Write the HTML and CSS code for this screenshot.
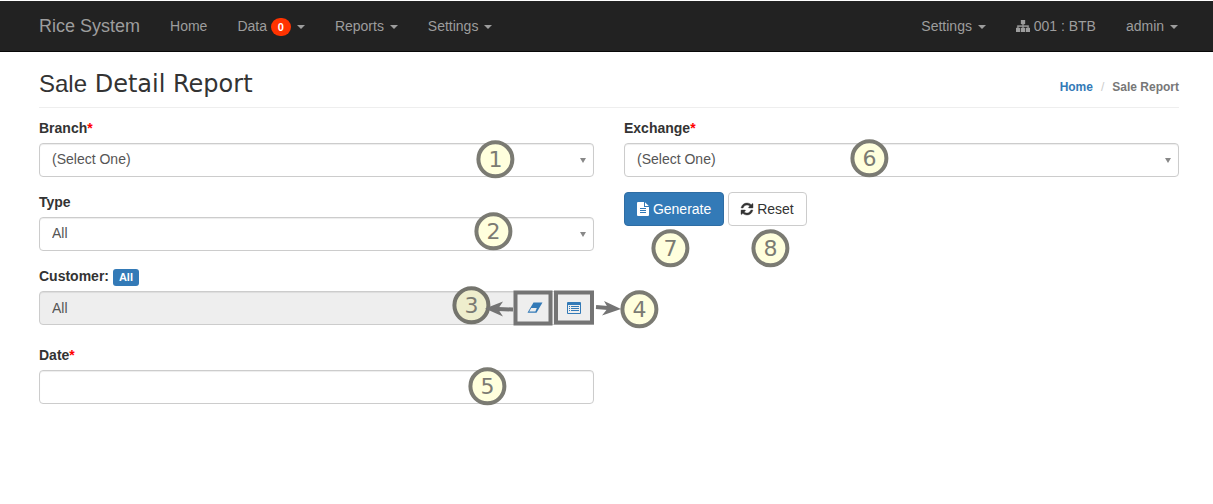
FILE: index.html
```html
<!DOCTYPE html>
<html lang="en">
<head>
<meta charset="utf-8">
<title>Sale Detail Report</title>
<link rel="stylesheet" href="styles.css">
</head>
<body>
<nav class="navbar">
  <a class="brand" href="#">Rice System</a>
  <ul class="nav">
    <li><a href="#">Home</a></li>
    <li><a href="#">Data <span class="badge">0</span> <span class="caret"></span></a></li>
    <li><a href="#">Reports <span class="caret"></span></a></li>
    <li><a href="#">Settings <span class="caret"></span></a></li>
  </ul>
  <ul class="nav nav-right">
    <li><a href="#">Settings <span class="caret"></span></a></li>
    <li><a href="#"><svg class="icon-tree" viewBox="0 0 14 12" aria-hidden="true"><path d="M5 0h4v4H7.600v1.500H12.700V8H14v4h-4V8h1.500V6.700H7.600V8H9v4H5V8h1.400V6.700H2.500V8H4v4H0V8h1.300V5.500H6.400V4H5z" fill="currentColor" stroke="currentColor" stroke-width="0.300"/></svg> 001 : BTB</a></li>
    <li><a href="#">admin <span class="caret"></span></a></li>
  </ul>
</nav>
<main class="page">
  <header class="page-header">
    <h1><span class="lead">Sale</span> Detail Report</h1>
    <ol class="breadcrumb">
      <li><a href="#">Home</a></li>
      <li class="current">Sale Report</li>
    </ol>
  </header>
  <form class="report-form">
    <div class="column">
      <div class="field">
        <label for="branch">Branch<span class="required">*</span></label>
        <div class="select-wrap"><select id="branch" class="control"><option>(Select One)</option></select></div>
      </div>
      <div class="field">
        <label for="type">Type</label>
        <div class="select-wrap"><select id="type" class="control"><option>All</option></select></div>
      </div>
      <div class="field field-customer">
        <label for="customer">Customer: <span class="tag">All</span></label>
        <div class="input-group">
          <input id="customer" class="control" type="text" value="All" readonly>
          <button type="button" class="addon" aria-label="Clear customer"><svg class="icon-addon" viewBox="0 0 16 12" aria-hidden="true"><path d="M6.500 0.500H15.500L9.500 10.800H0.500z" fill="#337ab7"/><path d="M4.200 6H9.800L8.400 9.400H2.200z" fill="#eee"/></svg></button>
          <button type="button" class="addon" aria-label="Choose customer"><svg class="icon-addon" viewBox="0 0 16 12" aria-hidden="true"><rect x="1" y="0" width="14" height="12" rx="1" fill="#337ab7"/><path d="M2 3h12v8H2z" fill="#eee"/><path d="M3 4h1v1H3zM3 6h1v1H3zM3 8h1v1H3zM5 4h8v1H5zM5 6h8v1H5zM5 8h8v1H5z" fill="#337ab7"/></svg></button>
        </div>
      </div>
      <div class="field">
        <label for="date">Date<span class="required">*</span></label>
        <input id="date" class="control" type="text">
      </div>
    </div>
    <div class="column">
      <div class="field">
        <label for="exchange">Exchange<span class="required">*</span></label>
        <div class="select-wrap"><select id="exchange" class="control"><option>(Select One)</option></select></div>
      </div>
      <div class="actions">
        <button type="submit" class="btn btn-primary"><svg class="icon-file" viewBox="0 0 12 14" aria-hidden="true"><path fill-rule="evenodd" d="M1 0H7V5H12V13q0 1-1 1H1q-1 0-1-1V1q0-1 1-1zM3 6v1h6v-1zM3 8v1h6v-1zM3 10v1h6v-1z" fill="currentColor"/><path d="M8 0.200L11.800 4H8z" fill="currentColor"/></svg> Generate</button>
        <button type="reset" class="btn"><svg class="icon-refresh" viewBox="0 0 1536 1536" aria-hidden="true"><path d="M1511 928q0 5-1 7-64 268-268 434.500T764 1536q-146 0-282.500-55T238 1324l-129 129q-19 19-45 19t-45-19-19-45V960q0-26 19-45t45-19h448q26 0 45 19t19 45-19 45l-137 137q71 66 161 102t187 36q134 0 250-65t186-179q11-17 53-117 8-23 30-23h192q13 0 22.500 9.500t9.500 22.500zm25-800v448q0 26-19 45t-45 19h-448q-26 0-45-19t-19-45 19-45l138-138Q969 256 768 256q-134 0-250 65T332 500q-11 17-53 117-8 23-30 23H50q-13 0-22.500-9.500T18 608v-7q65-268 270-434.500T768 0q146 0 284 55.500T1297 212l130-129q19-19 45-19t45 19 19 45z" fill="currentColor" stroke="currentColor" stroke-width="50"/></svg> Reset</button>
      </div>
    </div>
  </form>
</main>
<svg class="annotations" width="1213" height="504" viewBox="0 0 1213 504">
  <g class="boxes"><rect x="515.500" y="292.500" width="35" height="31"/><rect x="556" y="292.500" width="36" height="30"/></g>
  <g class="markers">
    <circle cx="495.400" cy="159.300" r="17"/><circle cx="493.400" cy="231.300" r="17"/><circle class="shaded" cx="471.400" cy="305.300" r="17"/><circle cx="639.400" cy="309.300" r="17"/>
    <circle cx="487.400" cy="386.300" r="17"/><circle cx="869.400" cy="158.300" r="17"/><circle cx="670.400" cy="248.300" r="17"/><circle cx="770.400" cy="248.300" r="17"/>
  </g>
  <g class="arrows"><path class="shaft" d="M513 309.500L498 309M596 307L608 308"/><path class="head" d="M485 308.500L503 301.500L498 309L503 316.500zM621 309L604 301L608 308L602 315.500z"/></g>
  <g class="numbers">
    <text x="495.400" y="167">1</text><text x="493.400" y="239">2</text><text x="471.400" y="313">3</text><text x="639.400" y="317">4</text>
    <text x="487.400" y="394">5</text><text x="869.400" y="166">6</text><text x="670.400" y="256">7</text><text x="770.400" y="256">8</text>
  </g>
</svg>
</body>
</html>
```
FILE: styles.css
```css
* { box-sizing: border-box; }
body {
  margin: 0;
  padding-top: 1px;
  background: #fff;
  color: #333;
  font: 14px/20px "Liberation Sans", Arial, sans-serif;
}
a { color: #337ab7; text-decoration: none; }
.navbar {
  display: flex;
  min-height: 51px;
  padding: 0 20px 0 39px;
  background: #222;
  border-bottom: 1px solid #080808;
}
.brand { padding: 15px 15px 15px 0; font-size: 18px; color: #9d9d9d; }
.nav { display: flex; margin: 0; padding: 0; list-style: none; }
.nav-right { margin-left: auto; }
.nav a { display: block; padding: 15px; color: #9d9d9d; white-space: nowrap; }
.caret {
  display: inline-block;
  margin-left: 2px;
  vertical-align: middle;
  border-top: 4px solid;
  border-left: 4px solid transparent;
  border-right: 4px solid transparent;
}
.badge {
  display: inline-block;
  min-width: 20px;
  padding: 3px 7px;
  border-radius: 10px;
  background: #f30;
  color: #fff;
  font-size: 11px;
  font-weight: bold;
  line-height: 12px;
  text-align: center;
  vertical-align: middle;
}
.icon-tree { width: 14px; height: 12px; vertical-align: -1px; }
.page { padding: 0 34px 0 39px; }
.page-header {
  display: flex;
  justify-content: space-between;
  align-items: flex-end;
  height: 56px;
  padding-bottom: 10px;
  border-bottom: 1px solid #eee;
}
h1 { margin: 0; font: 24px/26px "DejaVu Sans", sans-serif; }
.lead { font-family: "Liberation Sans", Arial, sans-serif; }
.breadcrumb {
  display: flex;
  margin: 0;
  padding: 0;
  list-style: none;
  font-size: 12px;
  font-weight: bold;
}
.current { color: #777; }
.current::before { content: "/"; padding: 0 8px; color: #ccc; font-weight: normal; }
.report-form {
  display: grid;
  grid-template-columns: 1fr 1fr;
  gap: 30px;
  padding-top: 10px;
}
.field { margin-bottom: 15px; }
.field-customer { margin-bottom: 20px; }
label { display: block; margin-bottom: 5px; font-weight: bold; }
.required { color: #f00; }
.control {
  display: block;
  width: 100%;
  height: 34px;
  margin: 0;
  padding: 6px 12px;
  border: 1px solid #ccc;
  border-radius: 4px;
  background: #fff;
  box-shadow: inset 0 1px 1px rgba(0, 0, 0, 0.075);
  color: #555;
  font: inherit;
}
select.control { appearance: none; padding: 5px 12px 7px; }
.select-wrap { position: relative; }
.select-wrap::after {
  content: "";
  position: absolute;
  top: 15px;
  right: 8px;
  border-top: 5px solid #888;
  border-left: 3px solid transparent;
  border-right: 3px solid transparent;
}
.tag {
  display: inline-block;
  padding: 3px 6px;
  border-radius: 3px;
  background: #337ab7;
  color: #fff;
  font-size: 11px;
  line-height: 11px;
}
.input-group { display: flex; }
.input-group .control { flex: 1; border-radius: 4px 0 0 4px; background: #eee; }
.addon {
  width: 40px;
  height: 34px;
  margin-left: -1px;
  padding: 0;
  border: 1px solid #ccc;
  background: #eee;
}
.icon-addon { display: block; width: 16px; height: 12px; margin: 0 auto; }
.actions { display: flex; gap: 4px; }
.btn {
  height: 34px;
  padding: 6px 12px;
  border: 1px solid #ccc;
  border-radius: 4px;
  background: #fff;
  color: #333;
  font: inherit;
}
.btn-primary { border-color: #2e6da4; background: #337ab7; color: #fff; }
.icon-file { width: 12px; height: 14px; vertical-align: -2px; }
.icon-refresh { width: 12px; height: 12px; vertical-align: -1px; overflow: visible; }
.annotations { position: absolute; top: 0; left: 0; pointer-events: none; }
.boxes rect { fill: none; stroke: #747474; stroke-width: 4px; }
.markers circle { fill: #ffffdd; stroke: #7b7b73; stroke-width: 4px; }
.markers .shaded { fill: #eeeecd; stroke: #74746d; }
.shaft { fill: none; stroke: #747474; stroke-width: 4px; }
.head { fill: #747474; }
.numbers text { fill: #7b7b73; font: 22px "DejaVu Sans", sans-serif; text-anchor: middle; }
```
